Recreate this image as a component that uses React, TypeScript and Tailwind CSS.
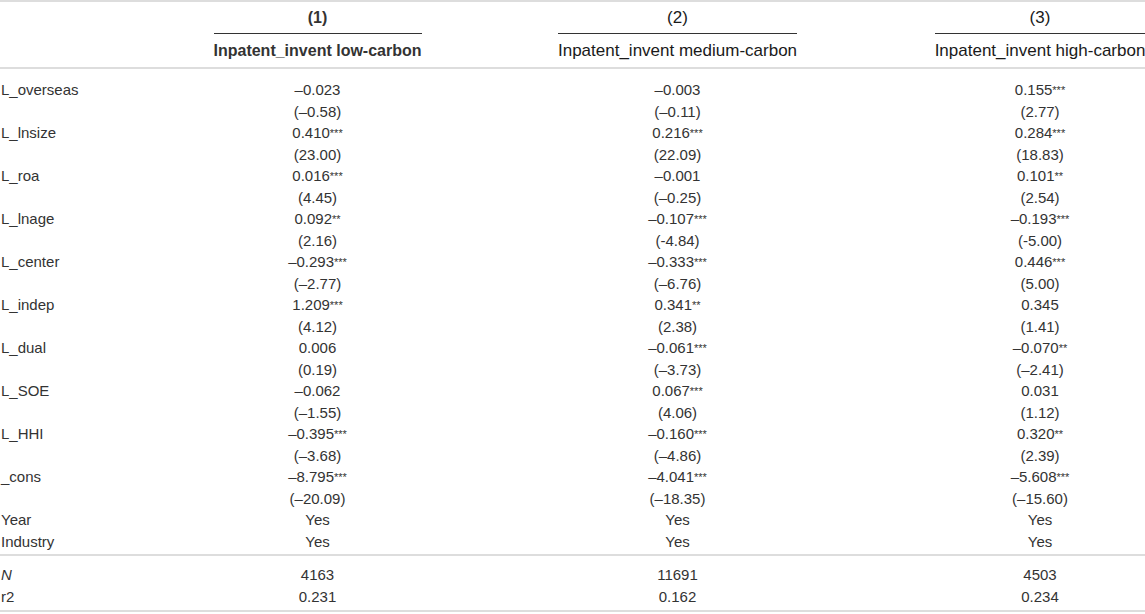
const rows: [string, string[][]][] = [
  ['L_overseas', [['–0.023', ''], ['–0.003', ''], ['0.155', '***']]],
  ['', [['(–0.58)', ''], ['(–0.11)', ''], ['(2.77)', '']]],
  ['L_lnsize', [['0.410', '***'], ['0.216', '***'], ['0.284', '***']]],
  ['', [['(23.00)', ''], ['(22.09)', ''], ['(18.83)', '']]],
  ['L_roa', [['0.016', '***'], ['–0.001', ''], ['0.101', '**']]],
  ['', [['(4.45)', ''], ['(–0.25)', ''], ['(2.54)', '']]],
  ['L_lnage', [['0.092', '**'], ['–0.107', '***'], ['–0.193', '***']]],
  ['', [['(2.16)', ''], ['(-4.84)', ''], ['(-5.00)', '']]],
  ['L_center', [['–0.293', '***'], ['–0.333', '***'], ['0.446', '***']]],
  ['', [['(–2.77)', ''], ['(–6.76)', ''], ['(5.00)', '']]],
  ['L_indep', [['1.209', '***'], ['0.341', '**'], ['0.345', '']]],
  ['', [['(4.12)', ''], ['(2.38)', ''], ['(1.41)', '']]],
  ['L_dual', [['0.006', ''], ['–0.061', '***'], ['–0.070', '**']]],
  ['', [['(0.19)', ''], ['(–3.73)', ''], ['(–2.41)', '']]],
  ['L_SOE', [['–0.062', ''], ['0.067', '***'], ['0.031', '']]],
  ['', [['(–1.55)', ''], ['(4.06)', ''], ['(1.12)', '']]],
  ['L_HHI', [['–0.395', '***'], ['–0.160', '***'], ['0.320', '**']]],
  ['', [['(–3.68)', ''], ['(–4.86)', ''], ['(2.39)', '']]],
  ['_cons', [['–8.795', '***'], ['–4.041', '***'], ['–5.608', '***']]],
  ['', [['(–20.09)', ''], ['(–18.35)', ''], ['(–15.60)', '']]],
  ['Year', [['Yes', ''], ['Yes', ''], ['Yes', '']]],
  ['Industry', [['Yes', ''], ['Yes', ''], ['Yes', '']]],
]

const stats: [string, string[]][] = [
  ['N', ['4163', '11691', '4503']],
  ['r2', ['0.231', '0.162', '0.234']],
]

const grid = 'grid grid-cols-[215px_205px_515px_210px]'

function Value({ v, stars }: { v: string; stars: string }) {
  return (
    <div className="flex items-center justify-center">
      <span>
        {v}
        {stars && <sup className="text-[11px] relative top-[-1px]">{stars}</sup>}
      </span>
    </div>
  )
}

function Header({ num, title, bold }: { num: string; title: string; bold?: boolean }) {
  return (
    <div className="flex justify-center">
      <div className={`flex flex-col shrink-0 ${bold ? 'font-bold text-[16px]' : 'text-[17px] text-[#1a1a1a]'}`}>
        <div className="h-[32px] flex items-center justify-center border-b border-[#333]">{num}</div>
        <div className="h-[33px] flex items-center justify-center whitespace-nowrap">{title}</div>
      </div>
    </div>
  )
}

export default function App() {
  return (
    <div
      className="w-[1145px] h-[614px] bg-white text-[#333] text-[15px] leading-none overflow-hidden"
      style={{ fontFamily: '"Liberation Sans", Arial, sans-serif' }}
    >
      <div className={`${grid} border-t-2 border-b-2 border-[#ddd]`}>
        <div />
        <Header num="(1)" title="Inpatent_invent low-carbon" bold />
        <Header num="(2)" title="Inpatent_invent medium-carbon" />
        <Header num="(3)" title="Inpatent_invent high-carbon" />
      </div>

      <div className="pt-[10px] border-b-2 border-[#ddd] pb-[2px]">
        {rows.map(([label, vals], i) => (
          <div key={i} className={`${grid} h-[21.5px]`}>
            <div className="flex items-center pl-[1px]">{label}</div>
            {vals.map(([v, s], j) => (
              <Value key={j} v={v} stars={s} />
            ))}
          </div>
        ))}
      </div>

      <div className="pt-[8px] pb-[3px] border-b-2 border-[#ddd]">
        {stats.map(([label, vals], i) => (
          <div key={i} className={`${grid} h-[21.5px]`}>
            <div className={`flex items-center pl-[1px] ${label === 'N' ? 'italic' : ''}`}>{label}</div>
            {vals.map((v, j) => (
              <Value key={j} v={v} stars="" />
            ))}
          </div>
        ))}
      </div>
    </div>
  )
}
